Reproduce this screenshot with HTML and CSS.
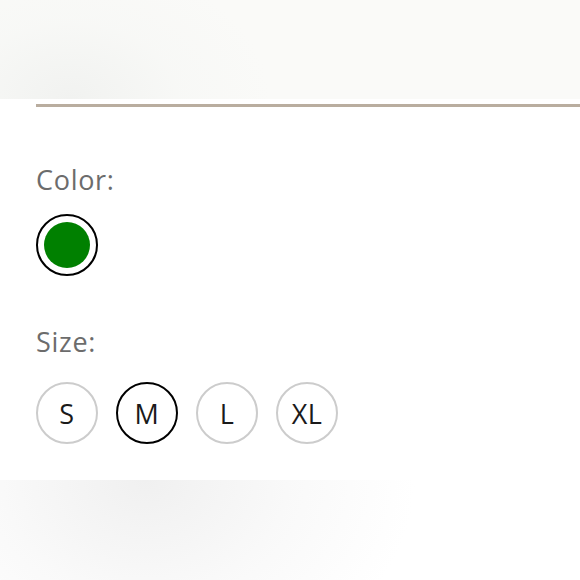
FILE: index.html
```html
<!DOCTYPE html>
<html lang="en">
<head>
<meta charset="utf-8">
<title>Product options</title>
<link rel="stylesheet" href="styles.css">
</head>
<body>
<div class="top-band"></div>
<main class="panel">
  <div class="rule"></div>
  <section class="option">
    <h3 class="label">Color:</h3>
    <div class="choices">
      <button class="swatch is-selected" aria-label="Green"><span class="dot"></span></button>
    </div>
  </section>
  <section class="option option-size">
    <h3 class="label">Size:</h3>
    <div class="choices sizes">
      <button class="size">S</button>
      <button class="size is-selected">M</button>
      <button class="size">L</button>
      <button class="size">XL</button>
    </div>
  </section>
</main>
<div class="bottom-band"></div>
</body>
</html>
```
FILE: styles.css
```css
* { box-sizing: border-box; }
html, body { margin: 0; padding: 0; background: #ffffff; }
body {
  width: 580px;
  height: 580px;
  overflow: hidden;
  font-family: "Open Sans", "Noto Sans", sans-serif;
}
.top-band {
  height: 99px;
  background:
    radial-gradient(ellipse 200px 140px at 70px 99px, #f1f2f0 0%, rgba(246,247,245,0.6) 55%, rgba(250,250,248,0) 100%),
    #fafaf8;
}
.panel {
  height: 381px;
  padding: 5px 0 0 36px;
  background: #ffffff;
}
.rule {
  height: 3px;
  background: #b9ad9f;
}
.label {
  margin: 0;
  font-size: 27px;
  font-weight: 400;
  line-height: 36px;
  letter-spacing: 0.7px;
  color: #6c6c6c;
}
.option .label { margin-top: 55px; }
.option-size .label { margin-top: 48px; }
.choices {
  display: flex;
  gap: 18px;
  margin-top: 16px;
}
.sizes { margin-top: 22px; }
button {
  font: inherit;
  padding: 0;
  margin: 0;
  background: #ffffff;
  cursor: pointer;
}
.swatch {
  width: 62px;
  height: 62px;
  border-radius: 50%;
  border: 2px solid #000000;
  display: flex;
  align-items: center;
  justify-content: center;
}
.dot {
  width: 46px;
  height: 46px;
  border-radius: 50%;
  background: #008000;
}
.size {
  width: 62px;
  height: 62px;
  border-radius: 50%;
  border: 2px solid #cccccc;
  display: flex;
  align-items: center;
  justify-content: center;
  font-size: 27px;
  font-weight: 400;
  letter-spacing: 0.5px;
  color: #1a1a1a;
  line-height: 1;
}
.size.is-selected { border-color: #000000; }
.bottom-band {
  height: 100px;
  background:
    radial-gradient(ellipse 270px 210px at 145px 0px, #f0f0f0 0%, rgba(247,247,247,0.7) 55%, rgba(255,255,255,0) 100%),
    #ffffff;
}
```
